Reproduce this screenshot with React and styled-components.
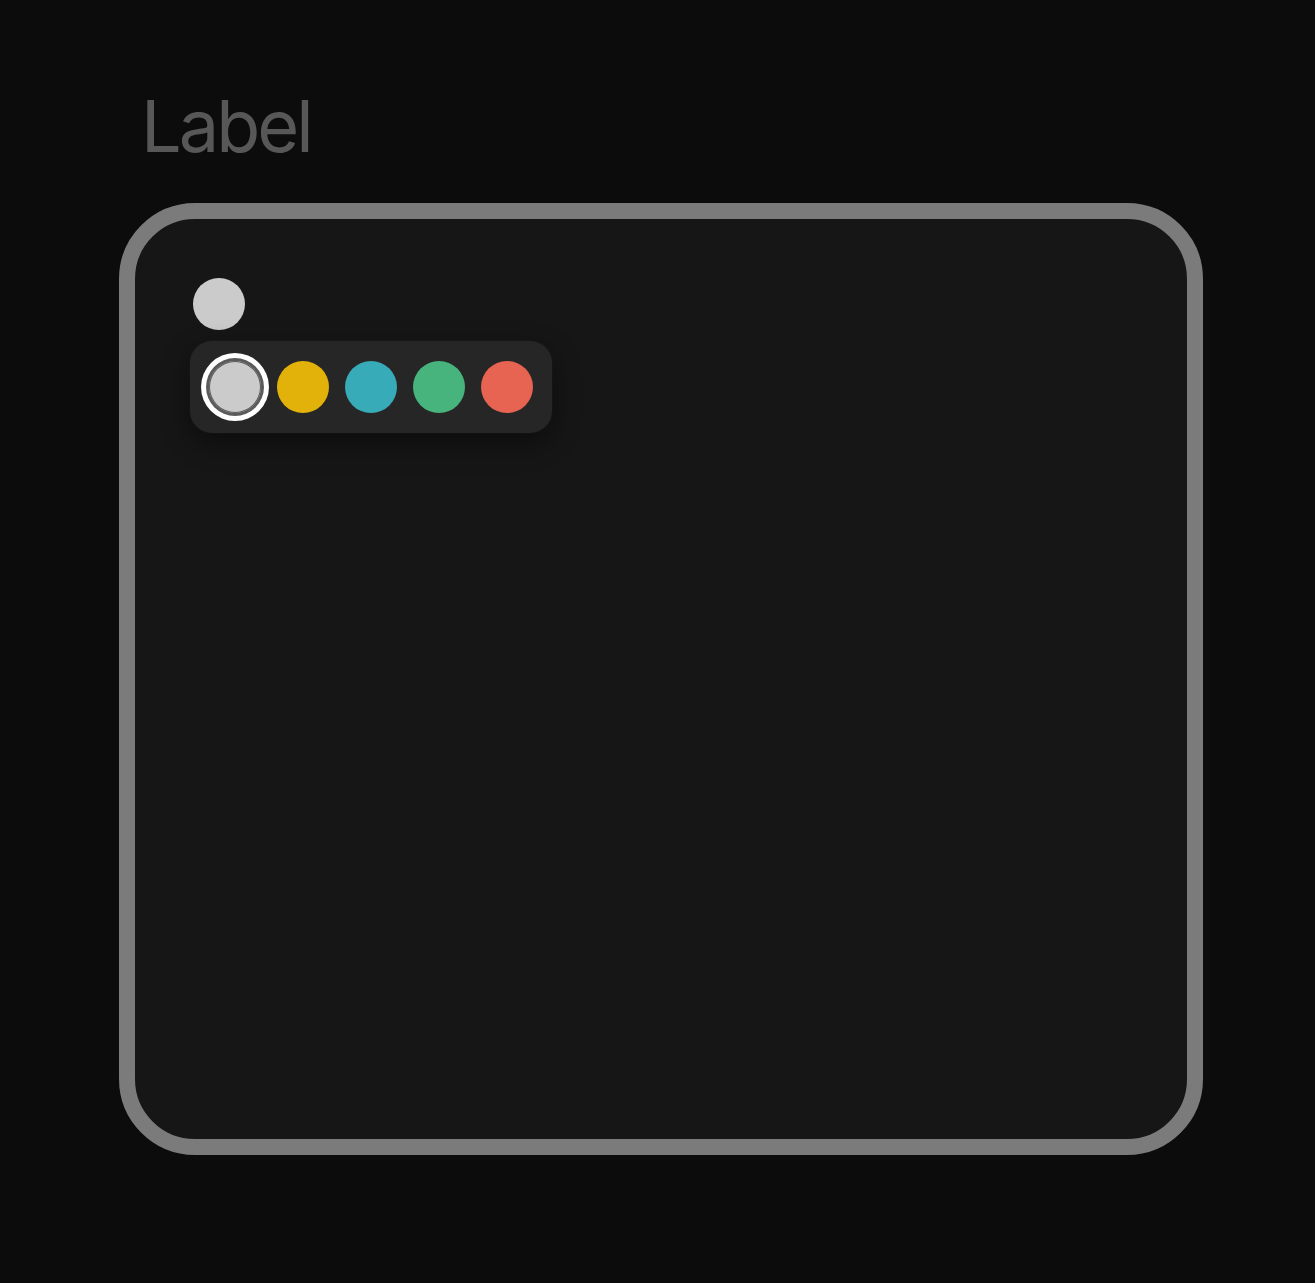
import React, { useState } from "react";
import styled, { createGlobalStyle } from "styled-components";

const Global = createGlobalStyle`
  html, body {
    margin: 0;
    padding: 0;
    background: #0c0c0c;
  }
  body {
    font-family: Inter, "Noto Sans", "Liberation Sans", sans-serif;
    -webkit-font-smoothing: antialiased;
  }
`;

const Page = styled.div`
  width: 1315px;
  height: 1283px;
  box-sizing: border-box;
  padding: 88px 112px 0 119px;
  display: flex;
  flex-direction: column;
  gap: 39px;
`;

const Label = styled.div`
  font-size: 72px;
  line-height: 76px;
  color: #575757;
  padding-left: 22px;
  letter-spacing: -3px;
`;

const Card = styled.div`
  width: 1084px;
  height: 952px;
  box-sizing: border-box;
  border: 16px solid #7b7b7b;
  border-radius: 76px;
  background: #161616;
  padding: 59px 0 0 58px;
`;

const Anchor = styled.div`
  position: relative;
  width: 52px;
  height: 52px;
`;

const Dot = styled.div`
  width: 52px;
  height: 52px;
  border-radius: 50%;
  background: #cbcbcb;
`;

const Popover = styled.div`
  position: absolute;
  top: 63px;
  left: -3px;
  display: flex;
  gap: 16px;
  padding: 20px 19px 20px 19px;
  background: #262626;
  border-radius: 22px;
  box-shadow: 0 10px 28px rgba(0, 0, 0, 0.45), 0 0 0 1px rgba(255, 255, 255, 0.02);
`;

const Swatch = styled.button`
  width: 52px;
  height: 52px;
  padding: 0;
  border: none;
  border-radius: 50%;
  background: ${(p) => p.$color};
  cursor: pointer;
  box-shadow: ${(p) =>
    p.$selected
      ? "inset 0 0 0 1px #5a5a5a, 0 0 0 3px #5a5a5a, 0 0 0 8px #ffffff"
      : "none"};
`;

const colors = ["#cbcbcb", "#e3b20a", "#38abb9", "#48b47d", "#e76352"];

export default function App() {
  const [selected, setSelected] = useState(0);
  return (
    <>
      <Global />
      <Page>
        <Label>Label</Label>
        <Card>
          <Anchor>
            <Dot style={{ background: colors[selected] }} />
            <Popover>
              {colors.map((c, i) => (
                <Swatch
                  key={c}
                  $color={c}
                  $selected={i === selected}
                  onClick={() => setSelected(i)}
                  aria-label={`color ${i + 1}`}
                />
              ))}
            </Popover>
          </Anchor>
        </Card>
      </Page>
    </>
  );
}
